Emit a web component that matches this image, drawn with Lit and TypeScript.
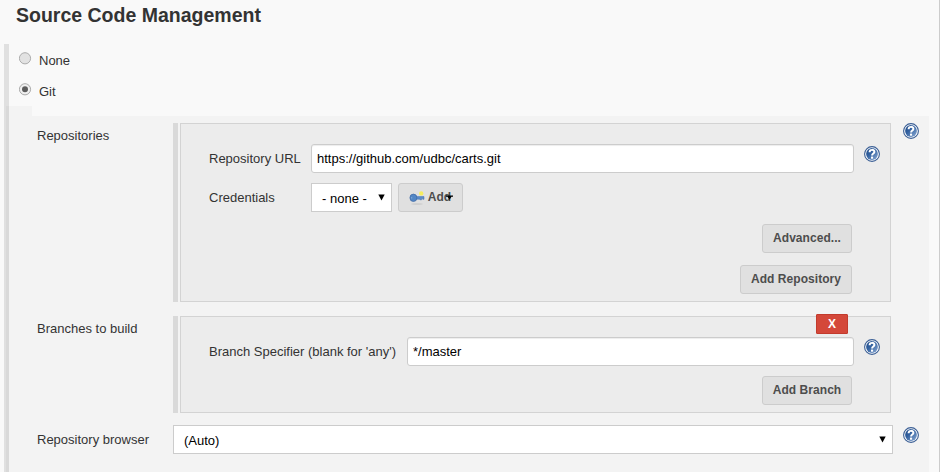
import { LitElement, html, css, svg } from "lit";
import { customElement, property } from "lit/decorators.js";

@customElement("help-icon")
class HelpIcon extends LitElement {
  static styles = css`
    :host { display: block; width: 16px; height: 16px; flex: none; }
    svg { display: block; }
  `;
  render() {
    return html`<svg width="16" height="16" viewBox="0 0 16 16">
      <defs>
        <linearGradient id="g" x1="0" y1="0" x2="1" y2="1">
          <stop offset="0" stop-color="#214b88" />
          <stop offset="0.4" stop-color="#31609f" />
          <stop offset="1" stop-color="#8dabd4" />
        </linearGradient>
      </defs>
      <circle cx="8" cy="8" r="7.4" fill="#fff" stroke="#3a5e94" stroke-width="1.1" />
      <circle cx="8" cy="8" r="5.9" fill="url(#g)" />
      <path d="M5.6 6.2C5.6 3.1 10.5 3.2 10.4 5.9C10.3 7.7 8.1 7.4 8.1 9.6" fill="none" stroke="#fff" stroke-width="2" />
      <rect x="7" y="10.6" width="2.1" height="2.1" fill="#fff" />
    </svg>`;
  }
}

@customElement("form-button")
class FormButton extends LitElement {
  static styles = css`
    :host { display: block; flex: none; height: 29px; }
    .btn {
      box-sizing: border-box; width: 100%; height: 29px; padding: 0 0 2px;
      display: flex; align-items: center; justify-content: center;
      border: 1px solid #ccc; border-radius: 3px; background: #e0e0e0;
      color: #4d4d4d; font: bold 12px "Liberation Sans", Arial, sans-serif;
      letter-spacing: 0.05px; white-space: nowrap;
    }
  `;
  render() {
    return html`<button class="btn"><slot></slot></button>`;
  }
}

@customElement("radio-row")
class RadioRow extends LitElement {
  @property({ type: Boolean }) checked = false;
  static styles = css`
    :host { display: flex; height: 31px; }
    svg { display: block; margin: 0 7px 0 0; }
    span { line-height: 16px; padding-top: 1px; }
  `;
  render() {
    return html`<svg width="13" height="13" viewBox="0 0 13 13">
        <circle cx="6" cy="6.3" r="5.6" fill="#e2e2e2" stroke="#acacac" />
        ${this.checked ? svg`<circle cx="6" cy="6.3" r="4.8" fill="#f0f0f0" /><circle cx="6" cy="6.3" r="3" fill="#5c5c5c" />` : ""}
      </svg><span><slot></slot></span>`;
  }
}

@customElement("app-root")
class AppRoot extends LitElement {
  static styles = css`
    :host {
      display: flex; box-sizing: border-box; width: 942px; height: 472px;
      overflow: hidden; background: #f9f9f9; color: #333;
      font: 13px "Liberation Sans", Arial, sans-serif; white-space: nowrap;
    }
    .page { width: 939px; height: 472px; border-right: 1px solid #ccc; flex: none; }
    .edge { flex: 1; background: #fff; }
    h1 { margin: 0; height: 44px; padding: 3px 0 0 16px; box-sizing: border-box; font-size: 19.5px; line-height: 24px; }
    .scm { display: flex; margin-left: 4px; height: 428px; }
    .rail { width: 5px; background: linear-gradient(#e0e0e0, #e0e0e0) 0 0 / 5px 62px no-repeat, linear-gradient(to right, #e0e0e0 2px, #d9d9d9 2px); flex: none; }
    .content { flex: none; width: 920px; }
    .radios { height: 62px; box-sizing: border-box; padding: 8px 0 0 10px; }
    .tab { width: 23px; height: 10px; background: #f3f3f3; }
    .form { height: 356px; background: #f3f3f3; box-sizing: border-box; padding: 7px 10px 0 28px; }
    .row { display: flex; align-items: flex-start; }
    .label { width: 136px; flex: none; line-height: 16px; padding-top: 5px; }
    .bar { width: 5px; flex: none; align-self: stretch; background: #d9d9d9; margin-right: 2px; }
    .panel { width: 711px; box-sizing: border-box; border: 1px solid #d3d3d3; background: #ececec; padding: 20px 10px 0 28px; flex: none; }
    .repos { height: 179px; }
    .branches { height: 97px; position: relative; }
    .outer-help { margin-left: 12px; }
    .field { display: flex; align-items: flex-start; height: 29px; }
    .field .name { line-height: 30px; flex: none; width: 102px; }
    .field .name.wide { width: 198px; }
    .input {
      flex: 1; min-width: 0; box-sizing: border-box; height: 29px; border: 1px solid #ccc; border-radius: 3px;
      background: #fff; box-shadow: inset 0 1px 1px rgba(0, 0, 0, 0.075); color: #000;
      font: inherit; padding: 0 5px; outline: none;
    }
    .field help-icon { margin: 2px 0 0 10px; }
    .creds { margin-top: 10px; }
    .select { box-sizing: border-box; flex: none; height: 29px; border: 1px solid #ccc; background: #fff; color: #000; display: flex; justify-content: space-between; line-height: 29px; padding: 0 6px 0 10px; }
    .select svg { margin-top: 10px; }
    .cred { width: 81px; margin-right: 6px; }
    .browser { width: 720px; padding-right: 6px; }
    .add { width: 65px; }
    .key { margin: 3px 3px 0 0; flex: none; }
    .caret { margin: 2px -1px 0 -5px; flex: none; }
    .actions { display: flex; justify-content: flex-end; margin: 12px 28px 0 0; }
    .branches .actions { margin-top: 10px; }
    .second { margin-top: 14px; }
    .third { margin-top: 12px; }
    .third .label { padding-top: 7px; }
    .third .outer-help { margin: 2px 0 0 10px; }
    .w90 { width: 90px; }
    .w112 { width: 112px; }
    .delete {
      position: absolute; top: -3px; right: 42px; width: 32px; height: 20px; box-sizing: border-box; padding: 0;
      border: 1px solid #c23b2d; border-radius: 1px; background: #d4483a; color: #fff; font: bold 12px "Liberation Sans", Arial, sans-serif;
    }
  `;

  arrow() {
    return html`<svg width="7" height="7" viewBox="0 0 7 7"><path d="M0.3 0.5H6.7L3.5 6.5Z" fill="#000" /></svg>`;
  }

  render() {
    return html`
      <div class="page">
        <h1>Source Code Management</h1>
        <div class="scm">
          <div class="rail"></div>
          <div class="content">
            <div class="radios">
              <radio-row>None</radio-row>
              <radio-row checked>Git</radio-row>
            </div>
            <div class="tab"></div>
            <div class="form">
              <div class="row">
                <div class="label">Repositories</div>
                <div class="bar"></div>
                <div class="panel repos">
                  <div class="field">
                    <span class="name">Repository URL</span>
                    <input class="input" value="https://github.com/udbc/carts.git" />
                    <help-icon></help-icon>
                  </div>
                  <div class="field creds">
                    <span class="name">Credentials</span>
                    <div class="select cred"><span>- none -</span>${this.arrow()}</div>
                    <form-button class="add">
                      <svg class="key" width="16" height="16" viewBox="0 0 16 16">
                        <ellipse cx="8" cy="14" rx="6" ry="0.7" fill="#c9c9c9" />
                        <circle cx="12.2" cy="3.4" r="2.2" fill="#f5ed60" />
                        <path d="M6 6.6H15V9.3H13.8V8.6H12.6V9.8H11V9.2H6Z" fill="#5c8dcb" stroke="#446fae" stroke-width="0.5" />
                        <ellipse cx="4.4" cy="7.8" rx="3.5" ry="3.7" fill="#5286c5" stroke="#4069a2" stroke-width="0.7" />
                        <circle cx="2.7" cy="7.8" r="0.6" fill="#9dbbe0" />
                      </svg>Add<svg class="caret" width="7" height="5" viewBox="0 0 7 5"><path d="M0 0.5H7V1.8H5.5L3.5 4.8L1.5 1.8H0Z" fill="#000" /></svg>
                    </form-button>
                  </div>
                  <div class="actions"><form-button class="w90">Advanced...</form-button></div>
                  <div class="actions"><form-button class="w112">Add Repository</form-button></div>
                </div>
                <help-icon class="outer-help"></help-icon>
              </div>
              <div class="row second">
                <div class="label">Branches to build</div>
                <div class="bar"></div>
                <div class="panel branches">
                  <button class="delete">X</button>
                  <div class="field">
                    <span class="name wide">Branch Specifier (blank for 'any')</span>
                    <input class="input" value="*/master" />
                    <help-icon></help-icon>
                  </div>
                  <div class="actions"><form-button class="w90">Add Branch</form-button></div>
                </div>
              </div>
              <div class="row third">
                <div class="label">Repository browser</div>
                <div class="select browser"><span>(Auto)</span>${this.arrow()}</div>
                <help-icon class="outer-help"></help-icon>
              </div>
            </div>
          </div>
        </div>
      </div>
      <div class="edge"></div>
    `;
  }
}
